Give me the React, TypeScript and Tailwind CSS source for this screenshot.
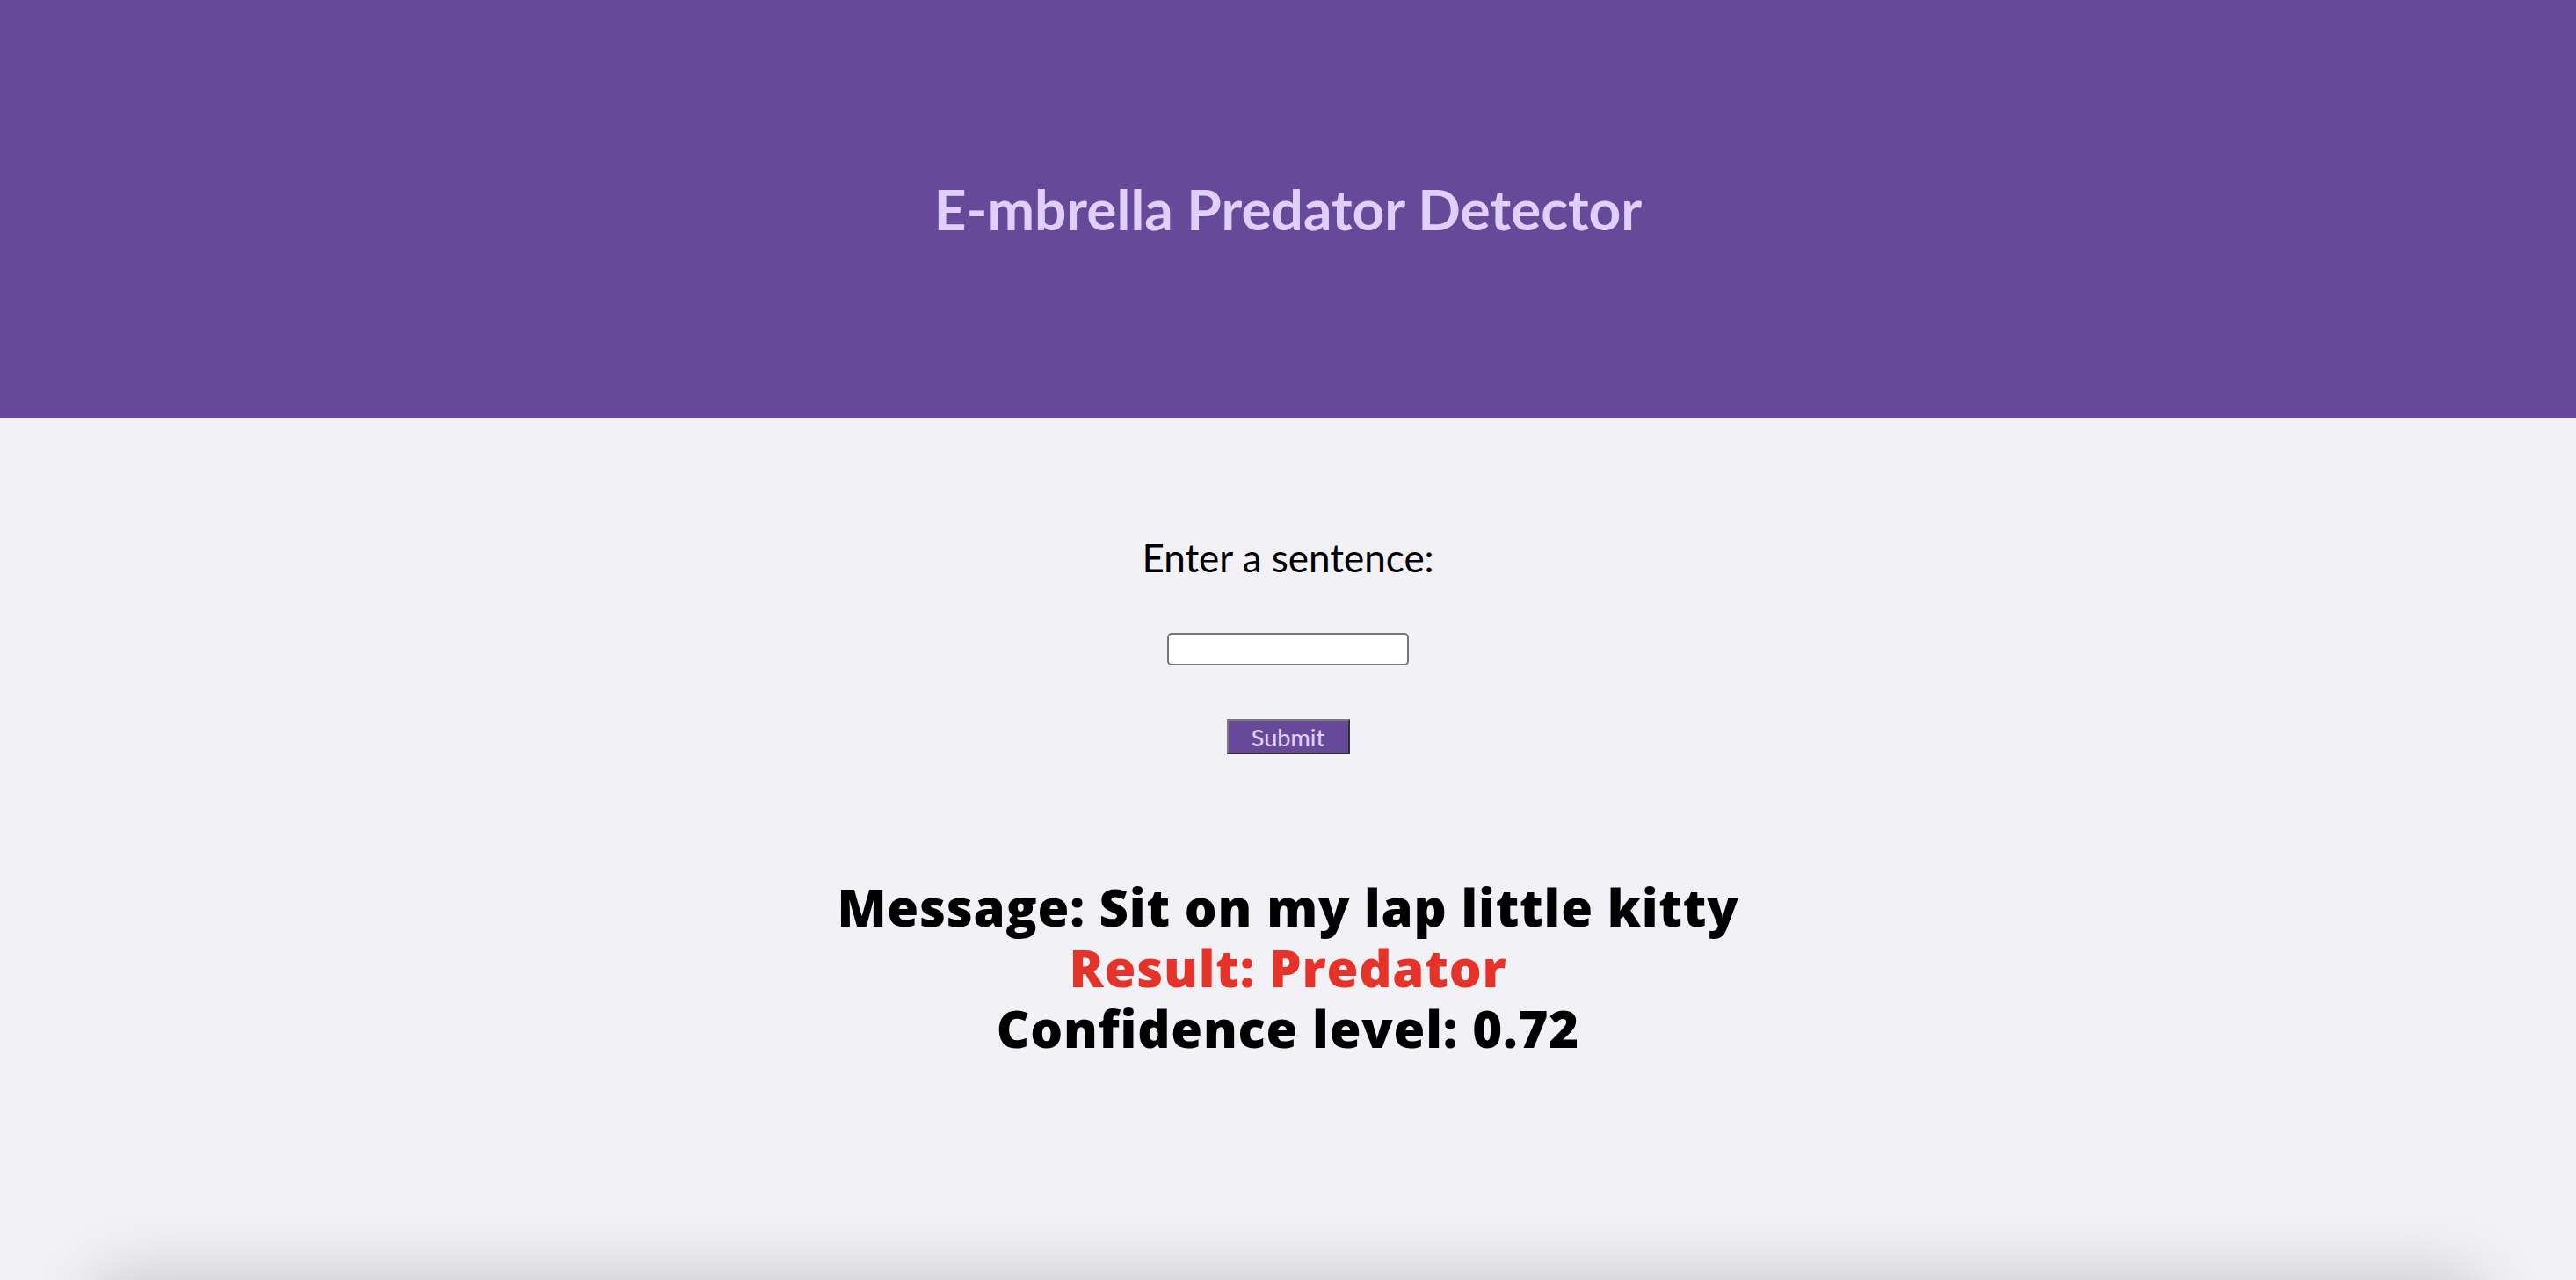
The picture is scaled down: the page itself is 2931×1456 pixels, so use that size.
import React, { useState } from "react";

export default function App() {
  const [text, setText] = useState("");

  return (
    <div className="bg-[#f2f1f6] font-['Lato',sans-serif] overflow-hidden">
      <div className="min-h-[1456px]">
        <header className="h-[476px] bg-[#674999] flex items-center justify-center">
          <h1 className="text-[64px] font-bold text-[#e0cffa] leading-none">
            E-mbrella Predator Detector
          </h1>
        </header>

        <main className="flex flex-col items-center">
          <label className="mt-[134px] text-[44px] leading-[48px] text-black">
            Enter a sentence:
          </label>
          <input
            value={text}
            onChange={(e) => setText(e.target.value)}
            className="mt-[62px] w-[275px] h-[37px] bg-white border-2 border-[#767676] rounded-[5px] px-2 text-[24px]"
          />
          <button className="mt-[61px] w-[140px] h-[40px] bg-[#674999] text-[#e0cffa] text-[27px] font-medium leading-none border-2 border-t-[#7a7a7a] border-l-[#7a7a7a] border-r-[#303030] border-b-[#303030]">
            Submit
          </button>

          <div className="mt-[139px] flex flex-col items-center text-[58px] leading-[69px] font-extrabold font-['Open_Sans',sans-serif] tracking-[0.8px]">
            <p className="text-black">Message: Sit on my lap little kitty</p>
            <p className="text-[#e63329]">Result: Predator</p>
            <p className="text-black">Confidence level: 0.72</p>
          </div>
        </main>
      </div>

      <div className="mx-[110px] h-[200px] bg-[#f2f1f6] shadow-[0_0_80px_rgba(0,0,0,0.2)]" />
    </div>
  );
}
